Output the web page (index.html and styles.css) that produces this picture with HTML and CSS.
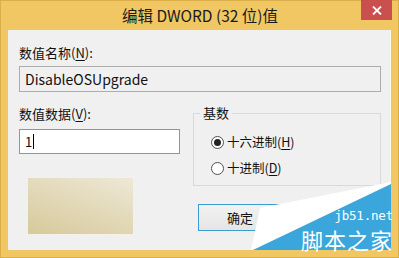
FILE: index.html
```html
<!DOCTYPE html>
<html lang="zh-CN">
<head>
<meta charset="utf-8">
<title>编辑 DWORD (32 位)值</title>
<link rel="stylesheet" href="styles.css">
</head>
<body>
<div class="window">
  <div class="titlebar">
    <span class="title">编辑 DWORD (32 位)值</span>
    <div class="close">
      <svg width="10" height="9" viewBox="0 0 10 9"><path d="M1 0.5 L9 8.5 M9 0.5 L1 8.5" stroke="#fff" stroke-width="1.8"/></svg>
    </div>
  </div>
  <div class="client">
    <div class="label first">数值名称(<u>N</u>):</div>
    <div class="textbox readonly">DisableOSUpgrade</div>
    <div class="row">
      <div class="leftcol">
        <div class="label second">数值数据(<u>V</u>):</div>
        <div class="textbox edit">1<span class="caret"></span></div>
        <div class="beige"></div>
      </div>
      <div class="rightcol">
        <div class="group">
          <span class="legend">基数</span>
          <div class="radio-row r1"><span class="radio checked"></span><span>十六进制(<u>H</u>)</span></div>
          <div class="radio-row r2"><span class="radio"></span><span>十进制(<u>D</u>)</span></div>
        </div>
        <div class="button">确定</div>
      </div>
    </div>
    <div class="watermark">
      <svg width="140" height="68" viewBox="0 0 140 68">
        <polygon points="0,68 9,26 140,0 140,2 2,68" fill="#ffffff"/>
        <polygon points="2,68 140,2 140,68" fill="#3ba6dc"/>
      </svg>
      <span class="wm-url">jb51.net</span>
      <span class="wm-name">脚本之家</span>
    </div>
  </div>
</div>
</body>
</html>
```
FILE: styles.css
```css
html, body {
  margin: 0;
  padding: 0;
  background: #f1c763;
}
body {
  font-family: "Noto Sans CJK SC", "Noto Sans", sans-serif;
}
.window {
  width: 399px;
  height: 258px;
  box-sizing: border-box;
  background: #f1c763;
  border: 1px solid #dcae48;
  display: flex;
  flex-direction: column;
}
.titlebar {
  height: 29px;
  position: relative;
  display: flex;
  align-items: center;
  justify-content: center;
}
.title {
  font-size: 15.5px;
  color: #1a1a1a;
  margin-top: -1px;
  margin-left: 1px;
}
.close {
  position: absolute;
  top: -1px;
  right: 6px;
  width: 31px;
  height: 20px;
  background: #c9504c;
  display: flex;
  align-items: center;
  justify-content: center;
}
.client {
  position: relative;
  margin: 0 7px 7px 7px;
  flex: 1;
  background: #f0f0f0;
  box-shadow: inset -1px 0 0 #fbf6ea;
  padding: 0 10px 0 11px;
  font-size: 13px;
  color: #111;
}
.label {
  height: 16px;
  line-height: 16px;
  white-space: nowrap;
}
.label.first { margin-top: 15px; }
.label.second { margin-top: 14px; }
u { text-decoration: underline; text-underline-offset: 2px; }
.textbox {
  box-sizing: border-box;
  display: flex;
  align-items: center;
  padding-left: 5px;
}
.textbox.readonly {
  margin-top: 5px;
  height: 26px;
  border: 1px solid #adadad;
  background: #f0f0f0;
  font-size: 14px;
}
.textbox.edit {
  margin-top: 7px;
  height: 25px;
  border: 1px solid #62a6c2;
  background: #fff;
}
.caret {
  display: inline-block;
  width: 1px;
  height: 15px;
  background: #000;
  margin-left: 1px;
}
.row {
  display: flex;
  gap: 13px;
}
.leftcol {
  width: 161px;
}
.beige {
  margin: 24px 0 0 9px;
  width: 105px;
  height: 56px;
  background: linear-gradient(20deg, #d6c99b 0%, #e1d7b5 45%, #eee8d6 100%);
  box-shadow: 0 0 0 1px #f4f1e8;
}
.rightcol {
  width: 188px;
}
.group {
  margin-top: 21px;
  height: 73px;
  box-sizing: border-box;
  border: 1px solid #d9d9d9;
  position: relative;
  padding-top: 20px;
}
.group .legend {
  position: absolute;
  left: 6px;
  top: -9px;
  padding: 0 3px;
  background: #f0f0f0;
  font-size: 13px;
  line-height: 16px;
}
.radio-row {
  display: flex;
  align-items: center;
  gap: 3px;
  margin-left: 17px;
  height: 16px;
  line-height: 16px;
  font-size: 12.5px;
}
.r2 { margin-top: 10px; }
.radio {
  width: 11px;
  height: 11px;
  border: 1px solid #505050;
  border-radius: 50%;
  background: #fff;
  position: relative;
  flex: none;
}
.radio.checked::after {
  content: "";
  position: absolute;
  left: 2px;
  top: 2px;
  width: 7px;
  height: 7px;
  border-radius: 50%;
  background: #222;
}
.button {
  margin: 18px 0 0 5px;
  width: 84px;
  height: 27px;
  box-sizing: border-box;
  border: 1px solid #3c9ccf;
  background: linear-gradient(#f2f2f2, #e5e5e5);
  display: flex;
  align-items: center;
  justify-content: center;
  font-size: 13px;
}
.watermark {
  position: absolute;
  right: 0;
  bottom: 0;
  width: 140px;
  height: 68px;
}
.watermark svg {
  position: absolute;
  left: 0;
  top: 0;
}
.wm-url {
  position: absolute;
  right: -2px;
  top: 27px;
  font-family: "DejaVu Sans Mono", monospace;
  font-size: 12.5px;
  line-height: 13px;
  color: #fff;
  letter-spacing: -0.2px;
}
.wm-name {
  position: absolute;
  right: -2px;
  top: 46px;
  font-size: 22px;
  line-height: 22px;
  color: #fff;
  letter-spacing: 1px;
}
```
